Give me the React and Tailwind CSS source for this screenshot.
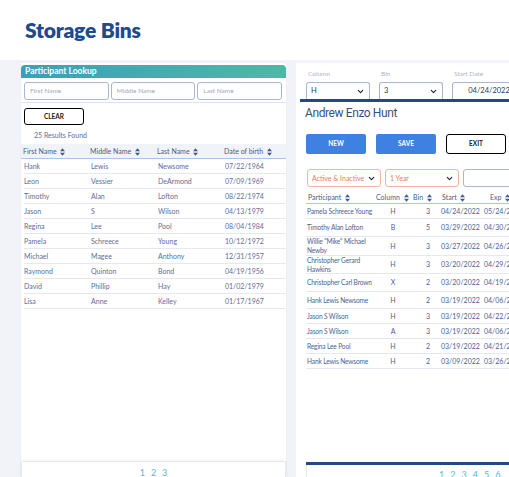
import React from "react";
import { ChevronDown } from "lucide-react";

const Sort = () => (
  <svg width="5" height="8" viewBox="0 0 5 8" className="inline-block ml-[2px] align-middle">
    <path d="M0 3.2 L2.5 0.2 L5 3.2 Z M0 4.8 L2.5 7.8 L5 4.8 Z" fill="#3c5a94" />
  </svg>
);

const people = [
  ["Hank", "Lewis", "Newsome", "07/22/1964"],
  ["Leon", "Vessier", "DeArmond", "07/09/1969"],
  ["Timothy", "Alan", "Lofton", "08/22/1974"],
  ["Jason", "S", "Wilson", "04/13/1979"],
  ["Regina", "Lee", "Pool", "08/04/1984"],
  ["Pamela", "Schreece", "Young", "10/12/1972"],
  ["Michael", "Magee", "Anthony", "12/31/1957"],
  ["Raymond", "Quinton", "Bond", "04/19/1956"],
  ["David", "Phillip", "Hay", "01/02/1979"],
  ["Lisa", "Anne", "Kelley", "01/17/1967"],
];

const bins = [
  ["Pamela Schreece Young", "H", "3", "04/24/2022", "05/24/2022", 15],
  ["Timothy Alan Lofton", "B", "5", "03/29/2022", "04/30/2022", 18],
  ["Willie \"Mike\" Michael Newby", "H", "3", "03/27/2022", "04/26/2022", 19],
  ["Christopher Gerard Hawkins", "H", "3", "03/20/2022", "04/29/2022", 18],
  ["Christopher Carl Brown", "X", "2", "03/20/2022", "04/19/2022", 18],
  ["Hank Lewis Newsome", "H", "2", "03/19/2022", "04/06/2022", 17],
  ["Jason S Wilson", "H", "3", "03/19/2022", "04/22/2022", 15],
  ["Jason S Wilson", "A", "3", "03/19/2022", "04/06/2022", 15],
  ["Regina Lee Pool", "H", "2", "03/19/2022", "04/21/2022", 15],
  ["Hank Lewis Newsome", "H", "2", "03/09/2022", "03/26/2022", 15],
];

export default function App() {
  return (
    <div
      className="w-[509px] h-[477px] overflow-hidden bg-white flex flex-col"
      style={{ fontFamily: "Lato, 'Noto Sans', sans-serif" }}
    >
      <div className="h-[60px] shrink-0 bg-white pl-[25px] pt-[17px]">
        <h1 className="text-[21px] leading-[26px] font-extrabold text-[#1e4b8d] tracking-[-0.2px]">
          Storage Bins
        </h1>
      </div>
      <div className="flex-1 bg-[#f1f3f8] flex pl-[21px] pt-[3px] gap-[10px] min-h-0">
        {/* Left panel */}
        <div className="w-[265px] shrink-0 bg-white flex flex-col pt-[2px] shadow-[0_0_2px_rgba(0,0,0,0.05)]">
          <div className="h-[13px] rounded-t-[4px] bg-gradient-to-r from-[#3c9fb8] to-[#4eb8a6] text-white text-[8.5px] font-bold leading-[13px] pl-[4px]">
            Participant Lookup
          </div>
          <div className="flex gap-[2px] pl-[3px] pr-[4px] pt-[4px] pb-[2px] border-b border-[#dde3ee]">
            {["First Name", "Middle Name", "Last Name"].map((p) => (
              <div
                key={p}
                className="flex-1 h-[18px] border border-[#a9b6cf] rounded-[3px] text-[6.5px] text-[#a0a8b8] leading-[16px] pl-[5px]"
              >
                {p}
              </div>
            ))}
          </div>
          <div className="pl-[3px] pt-[5px]">
            <div className="w-[60px] h-[17px] border-[1.5px] border-black rounded-[3px] text-[6.5px] font-bold text-[#222] flex items-center justify-center">
              CLEAR
            </div>
          </div>
          <div className="pl-[13px] pt-[5px] text-[7px] text-[#5a6f9c] leading-[10px]">25 Results Found</div>
          <div className="mt-[4px] h-[15px] bg-[#f0f3f8] border-b-[1.5px] border-[#a9c4ea] flex items-center text-[7px] text-[#4a5c87]">
            <div className="w-[67px] pl-[2px]">First Name <Sort /></div>
            <div className="w-[67px] pl-[2px]">Middle Name <Sort /></div>
            <div className="w-[67px] pl-[2px]">Last Name <Sort /></div>
            <div className="w-[64px] pl-[2px]">Date of birth <Sort /></div>
          </div>
          <div className="pl-[3px]">
            {people.map((r, i) => (
              <div key={i} className="h-[15px] border-b border-[#e5e8ef] flex items-center text-[7px] text-[#5d6e96]">
                <div className="w-[67px] pl-[0px]">{r[0]}</div>
                <div className="w-[67px]">{r[1]}</div>
                <div className="w-[67px]">{r[2]}</div>
                <div className="w-[60px]">{r[3]}</div>
              </div>
            ))}
          </div>
          <div className="flex-1" />
          <div className="h-[16px] border-t border-x border-[#e6e9ef] rounded-t-[2px] shadow-[0_-1px_3px_rgba(0,0,0,0.06)] flex justify-center pt-[6px] gap-[6px] text-[9px] leading-[10px] text-[#59b7d6]">
            <span>1</span>
            <span>2</span>
            <span>3</span>
          </div>
        </div>

        {/* Right panel */}
        <div className="w-[270px] shrink-0 bg-white flex flex-col pt-[7px]">
          <div className="flex gap-[9px] pl-[10px]">
            {[
              ["Column", "H", true],
              ["Bin", "3", true],
              ["Start Date", "04/24/2022", false],
            ].map(([l, v, sel]) => (
              <div key={l} className="w-[64px] flex flex-col">
                <div className="text-[6.5px] text-[#a9b5ca] leading-[8px] pl-[2px] mb-[4px]">{l}</div>
                <div className="h-[17px] border border-b-0 border-[#a9b6cf] rounded-t-[3px] flex items-center text-[7.5px] text-[#2d3a55] px-[4px]">
                  {sel ? (
                    <>
                      <span className="flex-1">{v}</span>
                      <ChevronDown size={9} strokeWidth={3} color="#222" />
                    </>
                  ) : (
                    <span className="flex-1 text-center pl-[10px]">{v}</span>
                  )}
                </div>
              </div>
            ))}
          </div>
          <div className="h-[3px] bg-[#1f4a85] ml-[4px]" />
          <div className="pl-[9px] pt-[4px] text-[12px] leading-[14px] text-[#3b5081] tracking-[-0.4px]" style={{ fontFamily: "Roboto, sans-serif" }}>
            Andrew Enzo Hunt
          </div>
          <div className="flex gap-[10px] pl-[10px] mt-[14px]">
            <div className="w-[60px] h-[20px] rounded-[2px] bg-[#3f81e0] text-white text-[6.5px] font-bold flex items-center justify-center">NEW</div>
            <div className="w-[60px] h-[20px] rounded-[2px] bg-[#3f81e0] text-white text-[6.5px] font-bold flex items-center justify-center">SAVE</div>
            <div className="w-[60px] h-[20px] rounded-[3px] border-[1.5px] border-black text-[#222] text-[6.5px] font-bold flex items-center justify-center">EXIT</div>
          </div>
          <div className="flex gap-[4px] pl-[11px] mt-[15px]">
            <div className="w-[74px] h-[18px] border border-[#f2b4a3] rounded-[3px] flex items-center px-[4px] text-[7px] text-[#ee7a5a]">
              <span className="flex-1">Active &amp; Inactive</span>
              <ChevronDown size={9} strokeWidth={3} color="#222" />
            </div>
            <div className="w-[74px] h-[18px] border border-[#f2b4a3] rounded-[3px] flex items-center px-[4px] text-[7px] text-[#ee7a5a]">
              <span className="flex-1">1 Year</span>
              <ChevronDown size={9} strokeWidth={3} color="#222" />
            </div>
            <div className="w-[74px] h-[18px] border border-[#a9b6cf] rounded-[3px]" />
          </div>
          <div className="ml-[10px] mt-[4px] h-[13px] border-b-[1.5px] border-[#a9c4ea] flex items-center text-[7px] text-[#4a5c87] leading-[10px]">
            <div className="w-[68px] pl-[2px]">Participant <Sort /></div>
            <div className="w-[36px] pl-[2px]">Column <Sort /></div>
            <div className="w-[26px] pl-[3px]">Bin <Sort /></div>
            <div className="w-[44px] pl-[6px]">Start <Sort /></div>
            <div className="w-[50px] pl-[10px]">Exp <Sort /></div>
          </div>
          <div className="ml-[10px]">
            {bins.map((r, i) => (
              <div
                key={i}
                className="border-b border-[#e5e8ef] flex items-center text-[7px] text-[#4d6291] leading-[9px]"
                style={{ height: r[5] + "px" }}
              >
                <div className="w-[68px] pl-[1px] pr-[1px] text-[6.6px] tracking-[-0.15px]">{r[0]}</div>
                <div className="w-[36px] text-center pl-[2px]">{r[1]}</div>
                <div className="w-[26px] text-right pr-[6px]">{r[2]}</div>
                <div className="w-[44px] pl-[5px]">{r[3]}</div>
                <div className="w-[50px] pl-[4px]">{r[4]}</div>
              </div>
            ))}
          </div>
          <div className="flex-1" />
          <div className="ml-[10px] h-[3px] bg-[#1f4a85]" />
          <div className="ml-[10px] h-[12px] border-l border-[#e6e9ef] flex gap-[6px] pl-[132px] pt-[5px] text-[9px] leading-[10px] text-[#59b7d6]">
            <span>1</span>
            <span>2</span>
            <span>3</span>
            <span>4</span>
            <span>5</span>
            <span>6</span>
          </div>
        </div>
      </div>
    </div>
  );
}
